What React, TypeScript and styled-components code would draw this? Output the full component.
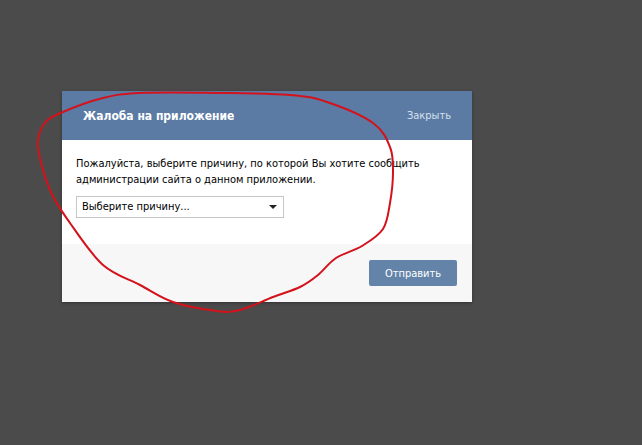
import styled, { createGlobalStyle } from "styled-components";

const GlobalStyle = createGlobalStyle`
   html, body {
      margin: 0;
      padding: 0;
      background: #4b4b4b;
   }
`;

const Page = styled.div`
   position: relative;
   width: 642px;
   height: 445px;
   padding: 91px 0 0 62px;
   box-sizing: border-box;
   font-family: "DejaVu Sans Condensed", "DejaVu Sans", Verdana, sans-serif;
`;

const Box = styled.div`
   width: 410px;
   background: #fff;
   box-shadow: 0 1px 3px rgba(0, 0, 0, 0.35);
`;

const Header = styled.div`
   height: 49px;
   background: #5b7ba5;
   display: flex;
   align-items: center;
   justify-content: space-between;
   padding: 0 21px;
   color: #fff;
`;

const Title = styled.div`
   font-size: 12px;
   font-weight: bold;
`;

const Close = styled.div`
   font-size: 11px;
   color: #d5e0ec;
   cursor: pointer;
`;

const Body = styled.div`
   padding: 16px 14px 26px;
   font-size: 11px;
   line-height: 16px;
   color: #000;
`;

const Select = styled.div`
   margin-top: 8px;
   width: 208px;
   height: 22px;
   box-sizing: border-box;
   border: 1px solid #c6c6c6;
   display: flex;
   align-items: center;
   justify-content: space-between;
   padding: 0 6px 0 5px;
   font-size: 11px;
`;

const Arrow = styled.span`
   width: 0;
   height: 0;
   border-left: 4px solid transparent;
   border-right: 4px solid transparent;
   border-top: 4px solid #222;
`;

const Footer = styled.div`
   height: 58px;
   background: #f7f7f7;
   display: flex;
   justify-content: flex-end;
   align-items: flex-start;
   padding: 16px 15px 0;
   box-sizing: border-box;
`;

const Button = styled.button`
   width: 88px;
   height: 26px;
   border: none;
   border-radius: 2px;
   background: #6383a8;
   color: #fff;
   font-family: inherit;
   font-size: 11px;
   cursor: pointer;
`;

const Scribble = styled.svg`
   position: absolute;
   left: 0;
   top: 0;
   pointer-events: none;
`;

// hand drawn red loop, catmull-rom through the traced points
const pts: [number, number][] = [
   [140, 93], [220, 93], [290, 95], [327, 102], [373, 123], [390, 147],
   [393, 172], [390, 203], [383, 229], [362, 246], [336, 258], [318, 275],
   [300, 287], [273, 297], [240, 310], [217, 311], [173, 302], [140, 285], [103, 265],
   [70, 223], [50, 190], [38, 147], [44, 124], [63, 112], [103, 98],
];

const loopPath = () => {
   const n = pts.length;
   let d = `M${pts[0][0]},${pts[0][1]}`;
   for (let i = 0; i < n; i++) {
      const p0 = pts[(i - 1 + n) % n];
      const p1 = pts[i];
      const p2 = pts[(i + 1) % n];
      const p3 = pts[(i + 2) % n];
      const c1 = [p1[0] + (p2[0] - p0[0]) / 6, p1[1] + (p2[1] - p0[1]) / 6];
      const c2 = [p2[0] - (p3[0] - p1[0]) / 6, p2[1] - (p3[1] - p1[1]) / 6];
      d += ` C${c1[0]},${c1[1]} ${c2[0]},${c2[1]} ${p2[0]},${p2[1]}`;
   }
   return d;
};

const App = () => {
   return (
      <>
         <GlobalStyle />
         <Page>
            <Box>
               <Header>
                  <Title>Жалоба на приложение</Title>
                  <Close>Закрыть</Close>
               </Header>
               <Body>
                  Пожалуйста, выберите причину, по которой Вы хотите сообщить
                  <br />
                  администрации сайта о данном приложении.
                  <Select>
                     Выберите причину...
                     <Arrow />
                  </Select>
               </Body>
               <Footer>
                  <Button>Отправить</Button>
               </Footer>
            </Box>
            <Scribble width="642" height="445">
               <path d={loopPath()} fill="none" stroke="#d3121b" strokeWidth="2" />
            </Scribble>
         </Page>
      </>
   );
};

export default App;
